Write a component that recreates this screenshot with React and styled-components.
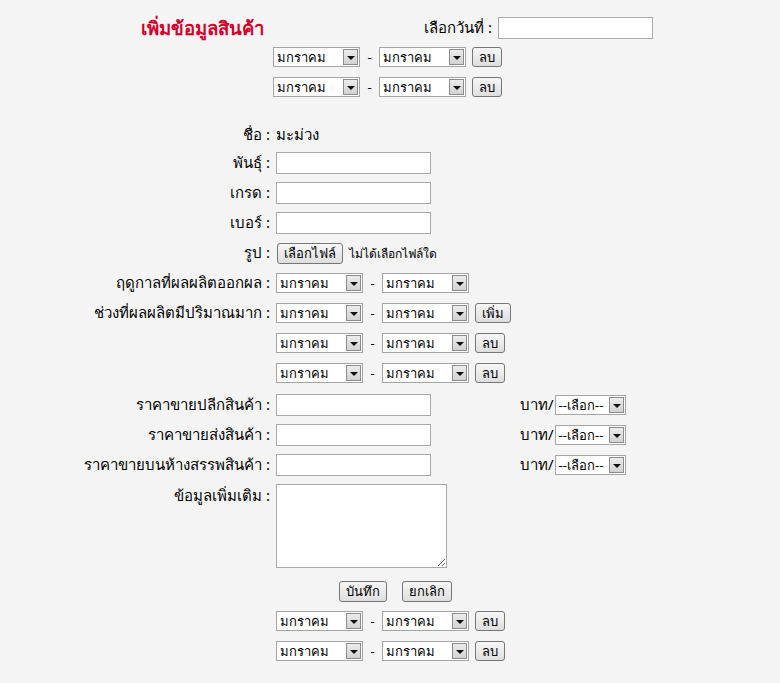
import React from 'react';
import { styled, createGlobalStyle } from 'styled-components';

const GlobalStyle = createGlobalStyle`
  html, body {
    margin: 0;
    padding: 0;
    background: #f4f4f4;
  }
  body {
    font-family: Tahoma, "Noto Sans", "DejaVu Sans", sans-serif;
    color: #000;
  }
`;

const months = ['มกราคม', 'มกราคม'];

function Select({ value, width = 87 }) {
  return (
    <SelectBox $w={width}>
      <SelectValue>{value}</SelectValue>
      <Arrow />
    </SelectBox>
  );
}

function MonthRange({ action }) {
  return (
    <RangeRow>
      <Select value={months[0]} />
      <Dash>-</Dash>
      <Select value={months[1]} />
      {action && <Button>{action}</Button>}
    </RangeRow>
  );
}

function App() {
  return (
    <Page>
      <GlobalStyle />
      <Header>
        <HeaderLeft>
          <Title>เพิ่มข้อมูลสินค้า</Title>
          <Label>เลือกวันที่ :</Label>
        </HeaderLeft>
        <TextInput />
      </Header>

      <TopRanges>
        <MonthRange action="ลบ" />
        <MonthRange action="ลบ" />
      </TopRanges>

      <Form>
        <Row $h={26}>
          <Label>ชื่อ :</Label>
          <Value>มะม่วง</Value>
        </Row>
        <Row>
          <Label>พันธุ์ :</Label>
          <TextInput />
        </Row>
        <Row>
          <Label>เกรด :</Label>
          <TextInput />
        </Row>
        <Row>
          <Label>เบอร์ :</Label>
          <TextInput />
        </Row>
        <Row>
          <Label>รูป :</Label>
          <FileField>
            <Button $h={21}>เลือกไฟล์</Button>
            <FileNote>ไม่ได้เลือกไฟล์ใด</FileNote>
          </FileField>
        </Row>
        <Row>
          <Label>ฤดูกาลที่ผลผลิตออกผล :</Label>
          <MonthRange />
        </Row>
        <Row>
          <Label>ช่วงที่ผลผลิตมีปริมาณมาก :</Label>
          <MonthRange action="เพิ่ม" />
        </Row>
        <Row>
          <span />
          <MonthRange action="ลบ" />
        </Row>
        <Row>
          <span />
          <MonthRange action="ลบ" />
        </Row>
        <Row $mt={2}>
          <Label>ราคาขายปลีกสินค้า :</Label>
          <TextInput />
          <Unit>
            บาท/
            <Select value="--เลือก--" width={71} />
          </Unit>
        </Row>
        <Row>
          <Label>ราคาขายส่งสินค้า :</Label>
          <TextInput />
          <Unit>
            บาท/
            <Select value="--เลือก--" width={71} />
          </Unit>
        </Row>
        <Row>
          <Label>ราคาขายบนห้างสรรพสินค้า :</Label>
          <TextInput />
          <Unit>
            บาท/
            <Select value="--เลือก--" width={71} />
          </Unit>
        </Row>
        <Row $h="auto" $mt={4} $top>
          <Label>ข้อมูลเพิ่มเติม :</Label>
          <Notes />
        </Row>
        <Row $mt={8}>
          <span />
          <Actions>
            <Button $h={21}>บันทึก</Button>
            <Button $h={21}>ยกเลิก</Button>
          </Actions>
        </Row>
        <Row>
          <span />
          <MonthRange action="ลบ" />
        </Row>
        <Row>
          <span />
          <MonthRange action="ลบ" />
        </Row>
      </Form>
    </Page>
  );
}

export default App;

const Page = styled.div`
  width: 780px;
  min-height: 683px;
  padding-top: 16px;
  box-sizing: border-box;
`;

const Header = styled.div`
  display: grid;
  grid-template-columns: 351px 155px;
  column-gap: 6px;
  align-items: center;
  height: 22px;
  padding-left: 141px;
`;

const HeaderLeft = styled.div`
  display: flex;
  justify-content: space-between;
  align-items: center;
`;

const Title = styled.h1`
  margin: 0;
  font-size: 18.5px;
  line-height: 22px;
  font-weight: bold;
  color: #d0002c;
`;

const TopRanges = styled.div`
  display: flex;
  flex-direction: column;
  gap: 10px;
  margin: 9px 0 0 273px;
`;

const RangeRow = styled.div`
  display: flex;
  align-items: center;
  height: 20px;
`;

const Dash = styled.span`
  width: 19px;
  text-align: center;
  font-size: 13px;
`;

const SelectBox = styled.div`
  display: flex;
  align-items: stretch;
  width: ${(p) => p.$w}px;
  height: 20px;
  box-sizing: border-box;
  border: 1px solid #a5a5a5;
  background: #fff;
`;

const SelectValue = styled.span`
  flex: 1;
  padding-left: 3px;
  font-size: 13px;
  line-height: 18px;
  white-space: nowrap;
  overflow: hidden;
`;

const Arrow = styled.span`
  position: relative;
  width: 15px;
  margin: 1px;
  box-sizing: border-box;
  border: 1px solid #8c8c8c;
  background: linear-gradient(#ececec, #d2d2d2);

  &::after {
    content: '';
    position: absolute;
    left: 3px;
    top: 6px;
    border-left: 4px solid transparent;
    border-right: 4px solid transparent;
    border-top: 4px solid #111;
  }
`;

const Button = styled.button`
  height: ${(p) => p.$h || 20}px;
  margin: 0 0 0 6px;
  padding: 0 6px;
  box-sizing: border-box;
  border: 1px solid #767676;
  border-radius: 3px;
  background: linear-gradient(#f7f7f7, #dedede);
  font-family: inherit;
  font-size: 13px;
  color: #000;
  line-height: 1;
`;

const Form = styled.div`
  display: flex;
  flex-direction: column;
  margin-top: 25px;
`;

const Row = styled.div`
  display: grid;
  grid-template-columns: 270px 238px auto;
  column-gap: 6px;
  align-items: ${(p) => (p.$top ? 'start' : 'center')};
  height: ${(p) => (typeof p.$h === 'number' ? `${p.$h}px` : p.$h || '30px')};
  margin-top: ${(p) => p.$mt || 0}px;
`;

const Label = styled.span`
  text-align: right;
  font-size: 15px;
  white-space: nowrap;
`;

const Value = styled.span`
  font-size: 15px;
`;

const TextInput = styled.input.attrs({ type: 'text' })`
  width: 155px;
  height: 22px;
  margin: 0;
  box-sizing: border-box;
  border: 1px solid #a9a9a9;
  background: #fff;
  padding: 0 3px;
  outline: none;
`;

const FileField = styled.div`
  display: flex;
  align-items: center;
  gap: 6px;

  & > button {
    margin-left: 1px;
  }
`;

const FileNote = styled.span`
  font-size: 12px;
`;

const Unit = styled.div`
  display: flex;
  align-items: center;
  gap: 1px;
  font-size: 15px;
`;

const Notes = styled.textarea`
  width: 171px;
  height: 84px;
  margin: 0;
  box-sizing: border-box;
  border: 1px solid #a9a9a9;
  background: #fff;
  resize: both;
  outline: none;
`;

const Actions = styled.div`
  display: flex;
  justify-content: center;
  gap: 15px;

  & > button {
    margin-left: 0;
  }
`;
